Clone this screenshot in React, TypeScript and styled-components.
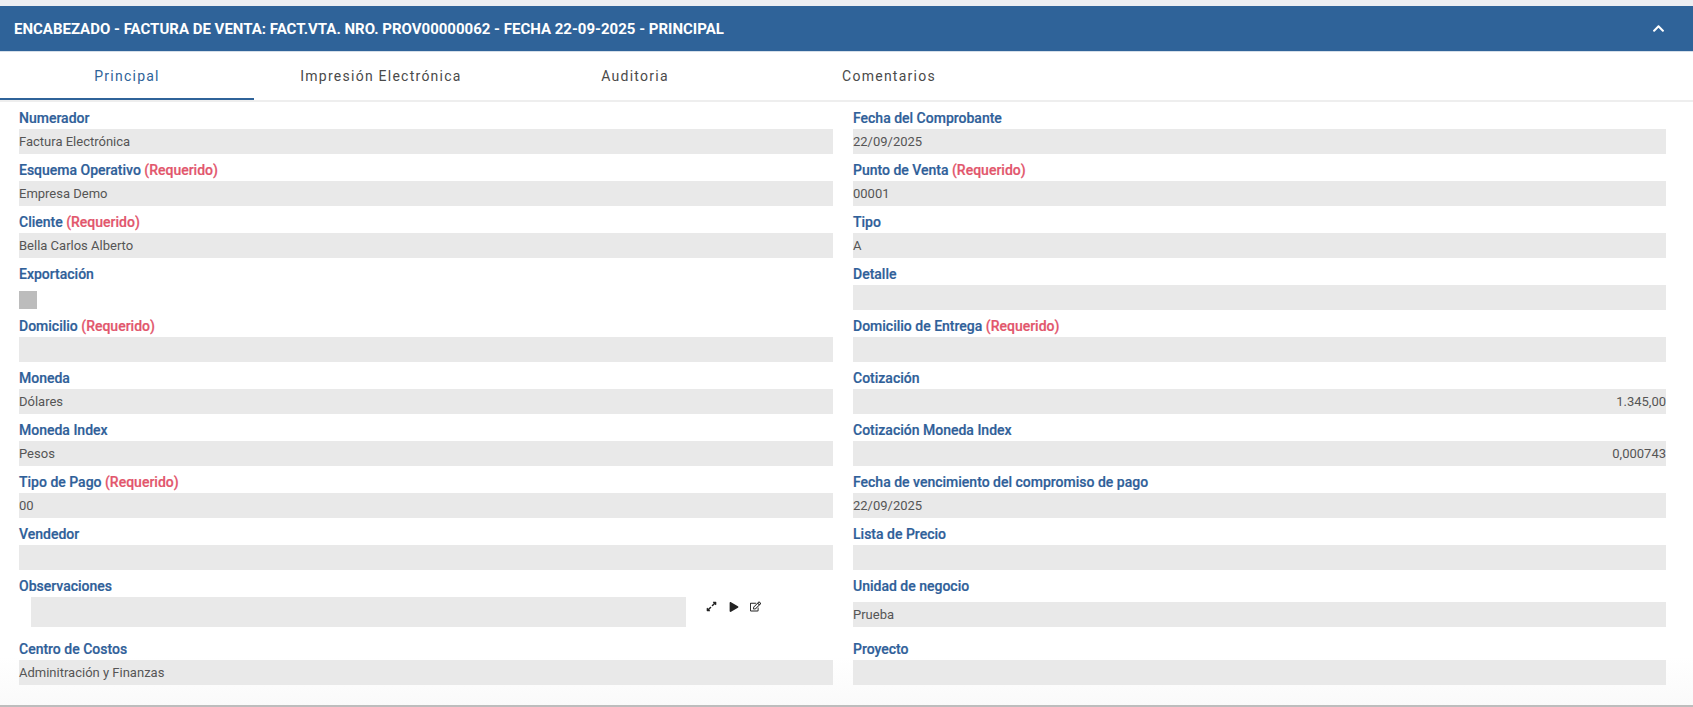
import React from "react";
import styled, { createGlobalStyle } from "styled-components";
import { FaChevronUp, FaExpandAlt, FaPlay, FaRegEdit } from "react-icons/fa";

const Global = createGlobalStyle`
  html, body { margin: 0; padding: 0; background: #fff; overflow: hidden; }
  body { font-family: Roboto, "Liberation Sans", sans-serif; }
`;

const Page = styled.div`
  height: 707px;
  display: flex;
  flex-direction: column;
  padding-top: 6px;
  box-sizing: border-box;
  background: linear-gradient(#eceef2, #eceef2) top / 100% 6px no-repeat, #fff;
`;

const Header = styled.div`
  height: 45px;
  flex: none;
  display: flex;
  align-items: center;
  justify-content: space-between;
  padding: 0 28px 0 14px;
  background: #2f6399;
  border-bottom: 1px solid #d5dfe9;
  box-sizing: content-box;
`;

const Title = styled.h1`
  margin: 0;
  font-size: 15px;
  font-weight: 700;
  color: #fff;
`;

const Chevron = styled.span`
  display: flex;
  color: #fff;
  font-size: 13px;
`;

const Tabs = styled.div`
  height: 48px;
  flex: none;
  display: flex;
  border-bottom: 2px solid #eeeeee;
`;

const Tab = styled.div<{ $active?: boolean }>`
  width: 254px;
  display: flex;
  align-items: center;
  justify-content: center;
  box-sizing: border-box;
  padding-top: 2px;
  font-size: 14px;
  letter-spacing: 1.25px;
  color: ${(p) => (p.$active ? "#2f6399" : "#4a4a4a")};
  border-bottom: 2px solid ${(p) => (p.$active ? "#2f6399" : "transparent")};
`;

const Form = styled.div`
  flex: 1;
  display: grid;
  grid-template-columns: 814px 813px;
  column-gap: 20px;
  grid-auto-rows: 52px;
  grid-template-rows: repeat(9, 52px) 63px 52px;
  padding: 0 27px 0 19px;
  background: linear-gradient(#fff, #fff 92%, #fafafa);
  border-bottom: 2px solid #bdbdbd;
`;

const Group = styled.div`
  display: flex;
  flex-direction: column;
  min-width: 0;
`;

const Label = styled.label`
  height: 27px;
  flex: none;
  display: flex;
  align-items: center;
  padding-top: 4px;
  box-sizing: border-box;
  font-size: 14px;
  font-weight: 500;
  color: #2f6099;
  -webkit-text-stroke: 0.2px currentColor;
  white-space: pre;
`;

const Required = styled.span`
  color: #e2566c;
`;

const Value = styled.div<{ $right?: boolean; $offset?: boolean }>`
  height: 25px;
  flex: none;
  display: flex;
  align-items: center;
  justify-content: ${(p) => (p.$right ? "flex-end" : "flex-start")};
  margin-top: ${(p) => (p.$offset ? "5px" : "0")};
  background: #e9e9e9;
  font-size: 13px;
  color: #555;
`;

const Check = styled.div`
  width: 18px;
  height: 18px;
  margin-top: 6px;
  background: #bcbcbc;
`;

const EditorRow = styled.div`
  display: flex;
  align-items: flex-start;
`;

const TextArea = styled.div`
  width: 655px;
  height: 30px;
  margin-left: 12px;
  background: #e9e9e9;
`;

const Tools = styled.div`
  display: flex;
  align-items: center;
  gap: 11px;
  height: 19px;
  margin-left: 20px;
  color: #222;
`;

const Tool = styled.span<{ $size?: number }>`
  display: flex;
  width: 11px;
  justify-content: center;
  font-size: ${(p) => p.$size ?? 11}px;
`;

type F = { label: string; req?: boolean; value?: string; right?: boolean };

const Field = ({ label, req, value, right }: F) => (
  <Group>
    <Label>
      {label}
      {req && <Required> (Requerido)</Required>}
    </Label>
    <Value $right={right}>{value}</Value>
  </Group>
);

export default function App() {
  return (
    <Page>
      <Global />
      <Header>
        <Title>ENCABEZADO - FACTURA DE VENTA: FACT.VTA. NRO. PROV00000062 - FECHA 22-09-2025 - PRINCIPAL</Title>
        <Chevron>
          <FaChevronUp />
        </Chevron>
      </Header>
      <Tabs>
        <Tab $active>Principal</Tab>
        <Tab>Impresión Electrónica</Tab>
        <Tab>Auditoria</Tab>
        <Tab>Comentarios</Tab>
      </Tabs>
      <Form>
        <Field label="Numerador" value="Factura Electrónica" />
        <Field label="Fecha del Comprobante" value="22/09/2025" />
        <Field label="Esquema Operativo" req value="Empresa Demo" />
        <Field label="Punto de Venta" req value="00001" />
        <Field label="Cliente" req value="Bella Carlos Alberto" />
        <Field label="Tipo" value="A" />
        <Group>
          <Label>Exportación</Label>
          <Check />
        </Group>
        <Field label="Detalle" />
        <Field label="Domicilio" req />
        <Field label="Domicilio de Entrega" req />
        <Field label="Moneda" value="Dólares" />
        <Field label="Cotización" value="1.345,00" right />
        <Field label="Moneda Index" value="Pesos" />
        <Field label="Cotización Moneda Index" value="0,000743" right />
        <Field label="Tipo de Pago" req value="00" />
        <Field label="Fecha de vencimiento del compromiso de pago" value="22/09/2025" />
        <Field label="Vendedor" />
        <Field label="Lista de Precio" />
        <Group>
          <Label>Observaciones</Label>
          <EditorRow>
            <TextArea />
            <Tools>
              <Tool>
                <FaExpandAlt />
              </Tool>
              <Tool $size={10}>
                <FaPlay />
              </Tool>
              <Tool>
                <FaRegEdit />
              </Tool>
            </Tools>
          </EditorRow>
        </Group>
        <Group>
          <Label>Unidad de negocio</Label>
          <Value $offset>Prueba</Value>
        </Group>
        <Field label="Centro de Costos" value="Adminitración y Finanzas" />
        <Field label="Proyecto" />
      </Form>
    </Page>
  );
}
